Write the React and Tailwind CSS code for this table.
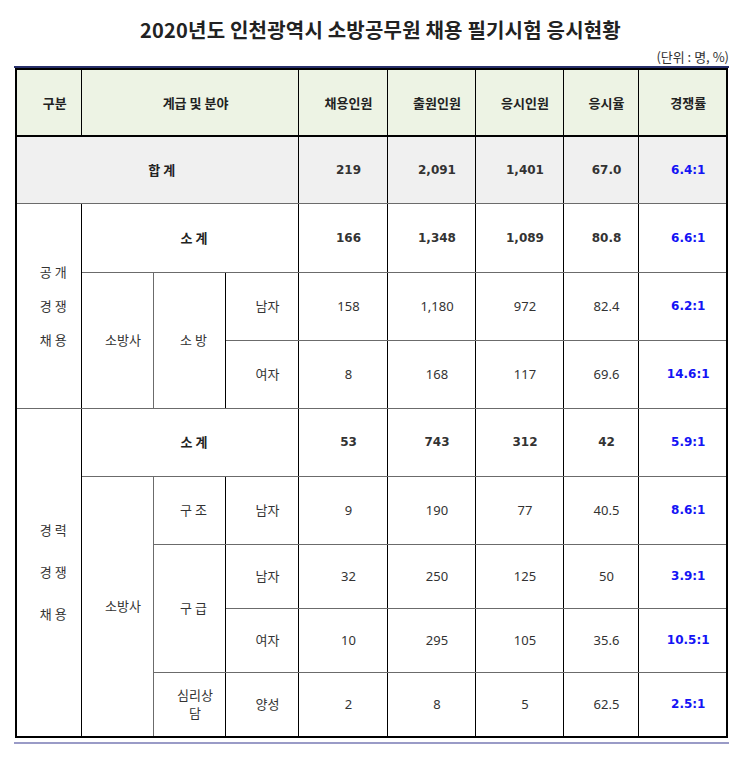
import React from "react";

const kr = "font-['Noto_Sans_CJK_KR',sans-serif]";
const boldNum = "font-['DejaVu_Sans','Noto_Sans_CJK_KR',sans-serif] font-bold text-[12px]";
const regNum = "font-['Noto_Sans','Noto_Sans_CJK_KR',sans-serif] text-[13px]";

// horizontal lines grey, main verticals black
const base = "border-y border-y-[#6b6b6b] border-x border-x-black text-center align-middle pl-3 pr-0 leading-[18px]";

function Td({ children, className = "", ...rest }) {
   return (
      <td className={`${base} ${className}`} {...rest}>
         {children}
      </td>
   );
}

function Nums({ vals, bold }) {
   const f = bold ? boldNum : regNum;
   return (
      <>
         {vals.slice(0, 4).map((v, i) => (
            <Td key={i} className={`${f} text-[#333]`}>
               {v}
            </Td>
         ))}
         <Td className={`${boldNum} text-[#1414f5]`}>{vals[4]}</Td>
      </>
   );
}

export default function App() {
   const lbl = `${kr} text-[13px] text-[#333]`;
   const lblB = `${kr} text-[13px] font-bold text-[#222]`;
   const grey = "border-x-[#6b6b6b]";

   return (
      <div className="w-[743px] h-[758px] bg-white text-[#333]">
         <h1 className={`${kr} pt-[16px] pl-[18px] text-center text-[20px] font-bold leading-[28px] tracking-[0.2px] text-[#222]`}>
            2020년도 인천광역시 소방공무원 채용 필기시험 응시현황
         </h1>
         <div className="mx-[14px]">
            <p className={`${kr} mt-[5px] text-right text-[13px] leading-[16px] text-[#333]`}>(단위 : 명, %)</p>
            <div className="mt-[1px] border-t-2 border-[#28306b]">
               <table className="mx-[1px] w-[711px] table-fixed border-collapse border-2 border-black">
                  <colgroup>
                     <col className="w-[65px]" />
                     <col className="w-[72px]" />
                     <col className="w-[72px]" />
                     <col className="w-[73px]" />
                     <col className="w-[89px]" />
                     <col className="w-[88px]" />
                     <col className="w-[88px]" />
                     <col className="w-[75px]" />
                     <col className="w-[89px]" />
                  </colgroup>
                  <tbody>
                     <tr className="h-[67px] bg-[#edf3e4]">
                        <Td className={`${lblB} border-b-2 border-b-black`}>구분</Td>
                        <Td colSpan={3} className={`${lblB} border-b-2 border-b-black`}>계급 및 분야</Td>
                        {["채용인원", "출원인원", "응시인원", "응시율", "경쟁률"].map((h) => (
                           <Td key={h} className={`${lblB} border-b-2 border-b-black`}>{h}</Td>
                        ))}
                     </tr>
                     <tr className="h-[67px] bg-[#f0f0f0]">
                        <Td colSpan={4} className={`${lblB} tracking-[3px]`}>합계</Td>
                        <Nums vals={["219", "2,091", "1,401", "67.0", "6.4:1"]} bold />
                     </tr>

                     <tr className="h-[69px]">
                        <Td rowSpan={3} className={`${lbl} leading-[34px] tracking-[3px]`}>
                           공개<br />경쟁<br />채용
                        </Td>
                        <Td colSpan={3} className={`${lblB} tracking-[3px]`}>소계</Td>
                        <Nums vals={["166", "1,348", "1,089", "80.8", "6.6:1"]} bold />
                     </tr>
                     <tr className="h-[68px]">
                        <Td rowSpan={2} className={`${lbl} border-r-[#6b6b6b]`}>소방사</Td>
                        <Td rowSpan={2} className={`${lbl} ${grey} tracking-[3px]`}>소방</Td>
                        <Td className={`${lbl} border-l-[#6b6b6b]`}>남자</Td>
                        <Nums vals={["158", "1,180", "972", "82.4", "6.2:1"]} />
                     </tr>
                     <tr className="h-[68px]">
                        <Td className={`${lbl} border-l-[#6b6b6b]`}>여자</Td>
                        <Nums vals={["8", "168", "117", "69.6", "14.6:1"]} />
                     </tr>

                     <tr className="h-[68px]">
                        <Td rowSpan={5} className={`${lbl} leading-[42px] tracking-[3px]`}>
                           경력<br />경쟁<br />채용
                        </Td>
                        <Td colSpan={3} className={`${lblB} tracking-[3px]`}>소계</Td>
                        <Nums vals={["53", "743", "312", "42", "5.9:1"]} bold />
                     </tr>
                     <tr className="h-[68px]">
                        <Td rowSpan={4} className={`${lbl} border-r-[#6b6b6b]`}>소방사</Td>
                        <Td className={`${lbl} ${grey} tracking-[3px]`}>구조</Td>
                        <Td className={`${lbl} border-l-[#6b6b6b]`}>남자</Td>
                        <Nums vals={["9", "190", "77", "40.5", "8.6:1"]} />
                     </tr>
                     <tr className="h-[64px]">
                        <Td rowSpan={2} className={`${lbl} ${grey} tracking-[3px]`}>구급</Td>
                        <Td className={`${lbl} border-l-[#6b6b6b]`}>남자</Td>
                        <Nums vals={["32", "250", "125", "50", "3.9:1"]} />
                     </tr>
                     <tr className="h-[64px]">
                        <Td className={`${lbl} border-l-[#6b6b6b]`}>여자</Td>
                        <Nums vals={["10", "295", "105", "35.6", "10.5:1"]} />
                     </tr>
                     <tr className="h-[65px]">
                        <Td className={`${lbl} ${grey}`}>
                           심리상<br />담
                        </Td>
                        <Td className={`${lbl} border-l-[#6b6b6b]`}>양성</Td>
                        <Nums vals={["2", "8", "5", "62.5", "2.5:1"]} />
                     </tr>
                  </tbody>
               </table>
            </div>
            <div className="mt-[4px] border-t-2 border-[#9a9bc7]" />
         </div>
      </div>
   );
}
